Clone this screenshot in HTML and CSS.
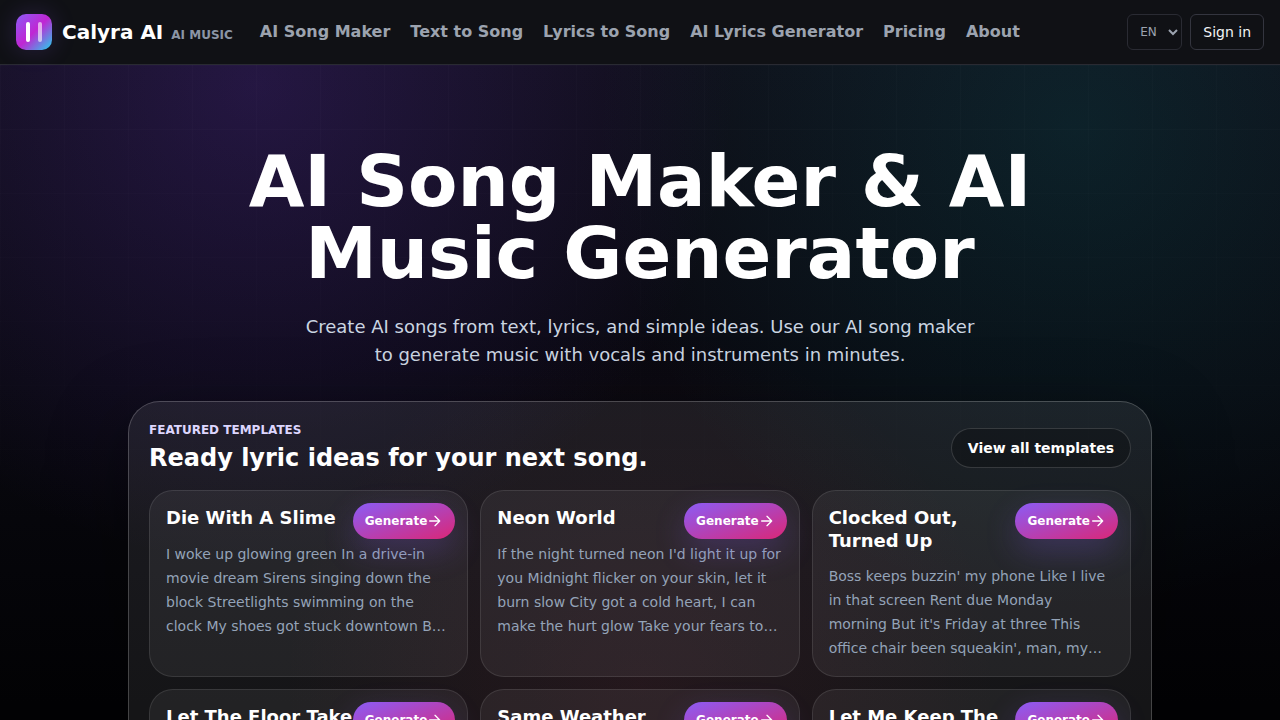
FILE: index.html
```html
<!DOCTYPE html>
<html lang="en">
<head>
<meta charset="utf-8">
<meta name="viewport" content="width=device-width, initial-scale=1">
<title>Calyra AI</title>
<link rel="stylesheet" href="styles.css">
</head>
<body>
<svg class="sprite" aria-hidden="true">
  <symbol id="arrow" viewBox="0 0 24 24"><path d="M4 12h15M12 5l7 7-7 7" fill="none" stroke="currentColor" stroke-width="2" stroke-linecap="round" stroke-linejoin="round"/></symbol>
</svg>
<header class="topbar">
  <a class="brand" href="#">
    <span class="logo"><span class="bar"></span><span class="bar bar-soft"></span></span>
    <span class="brand-text"><span class="brand-name">Calyra AI</span><span class="brand-tag">AI MUSIC</span></span>
  </a>
  <nav class="nav">
    <a href="#">AI Song Maker</a>
    <a href="#">Text to Song</a>
    <a href="#">Lyrics to Song</a>
    <a href="#">AI Lyrics Generator</a>
    <a href="#">Pricing</a>
    <a href="#">About</a>
  </nav>
  <div class="actions">
    <select class="lang" aria-label="Language"><option>EN</option></select>
    <button class="signin" type="button">Sign in</button>
  </div>
</header>
<main class="hero">
  <h1>AI Song Maker &amp; AI Music Generator</h1>
  <p class="lead">Create AI songs from text, lyrics, and simple ideas. Use our AI song maker to generate music with vocals and instruments in minutes.</p>
  <section class="panel">
    <div class="panel-head">
      <div>
        <p class="eyebrow">FEATURED TEMPLATES</p>
        <h2>Ready lyric ideas for your next song.</h2>
      </div>
      <a class="view-all" href="#">View all templates</a>
    </div>
    <div class="cards">
      <article class="card">
        <h3>Die With A Slime</h3>
        <p>I woke up glowing green In a drive-in movie dream Sirens singing down the block Streetlights swimming on the clock My shoes got stuck downtown B…</p>
        <button class="generate" type="button">Generate<svg><use href="#arrow"/></svg></button>
      </article>
      <article class="card">
        <h3>Neon World</h3>
        <p>If the night turned neon I'd light it up for you Midnight flicker on your skin, let it burn slow City got a cold heart, I can make the hurt glow Take your fears to…</p>
        <button class="generate" type="button">Generate<svg><use href="#arrow"/></svg></button>
      </article>
      <article class="card">
        <h3>Clocked Out, Turned Up</h3>
        <p>Boss keeps buzzin' my phone Like I live in that screen Rent due Monday morning But it's Friday at three This office chair been squeakin', man, my…</p>
        <button class="generate" type="button">Generate<svg><use href="#arrow"/></svg></button>
      </article>
      <article class="card">
        <h3>Let The Floor Take</h3>
        <button class="generate" type="button">Generate<svg><use href="#arrow"/></svg></button>
      </article>
      <article class="card">
        <h3>Same Weather</h3>
        <button class="generate" type="button">Generate<svg><use href="#arrow"/></svg></button>
      </article>
      <article class="card">
        <h3>Let Me Keep The</h3>
        <button class="generate" type="button">Generate<svg><use href="#arrow"/></svg></button>
      </article>
    </div>
  </section>
</main>
</body>
</html>
```
FILE: styles.css
```css
* { box-sizing: border-box; }
body {
  margin: 0;
  background: #020204;
  color: #fff;
  font-family: "DejaVu Sans", sans-serif;
}
h1, h2, h3, p { margin: 0; }
a { color: inherit; text-decoration: none; }
button, select { font-family: inherit; }
.sprite { display: none; }

.topbar {
  position: relative;
  z-index: 1;
  display: flex;
  align-items: center;
  height: 65px;
  padding: 0 16px;
  background: #101115;
  border-bottom: 1px solid #292a32;
}
.brand { display: flex; align-items: center; gap: 10px; }
.logo {
  display: flex;
  align-items: center;
  justify-content: center;
  gap: 8px;
  width: 36px;
  height: 36px;
  border-radius: 10px;
  background: linear-gradient(135deg, #8b5cf6 0%, #c026d3 50%, #22d3ee 100%);
  box-shadow: 0 0 24px rgba(139, 92, 246, 0.2);
}
.bar { width: 4px; height: 20px; border-radius: 2px; background: #fff; }
.bar-soft { background: rgba(255, 255, 255, 0.6); }
.brand-text { display: flex; align-items: baseline; gap: 8px; }
.brand-name { font-size: 20px; font-weight: 600; }
.brand-tag { font-size: 12px; font-weight: 600; color: #8b95a5; }
.nav {
  display: flex;
  gap: 20px;
  margin-left: 27px;
  padding-bottom: 2px;
  font-size: 16px;
  font-weight: 600;
  color: #9ca3af;
}
.actions { display: flex; gap: 8px; margin-left: auto; }
.lang, .signin {
  height: 36px;
  border: 1px solid #2a2b33;
  border-radius: 6px;
  background: #101115;
}
.lang { width: 55px; padding: 0 0 0 8px; font-size: 12px; color: #9ca3af; }
.signin { padding: 0 12px; border-color: #34353f; font-size: 14px; color: #f3f4f6; }

.hero {
  position: relative;
  padding: 80px 24px 64px;
  text-align: center;
  background:
    radial-gradient(circle 480px at 20% 20px, rgba(124, 58, 237, 0.2), transparent),
    radial-gradient(circle 480px at 84% 64px, rgba(6, 182, 180, 0.12), transparent),
    radial-gradient(circle 360px at 50% 620px, rgba(225, 29, 72, 0.07), transparent),
    linear-gradient(180deg, #0f0e18 0, #090910 320px, #020204 640px);
}
.hero::before {
  content: "";
  position: absolute;
  inset: 0;
  background:
    linear-gradient(90deg, rgba(255, 255, 255, 0.014) 1px, transparent 1px) 0 0 / 64px 64px,
    linear-gradient(rgba(255, 255, 255, 0.014) 1px, transparent 1px) 0 0 / 64px 64px;
  mask-image: linear-gradient(#000, transparent 640px);
}
.hero > * { position: relative; }
h1 {
  max-width: 896px;
  margin: 0 auto;
  font-size: 72px;
  line-height: 72px;
  font-weight: 600;
}
.lead {
  max-width: 672px;
  margin: 24px auto 0;
  font-size: 18px;
  line-height: 28px;
  color: #cbd5e1;
}
.panel {
  max-width: 1024px;
  margin: 32px auto 0;
  padding: 20px;
  border: 1px solid rgba(255, 255, 255, 0.2);
  border-radius: 32px;
  background: rgba(255, 255, 255, 0.08);
  box-shadow: 0 24px 80px rgba(0, 0, 0, 0.4);
  text-align: left;
}
.panel-head {
  display: flex;
  align-items: center;
  justify-content: space-between;
  margin-bottom: 16px;
}
.eyebrow { font-size: 12px; line-height: 16px; font-weight: 600; color: #ddd6fe; }
h2 { margin-top: 4px; font-size: 24px; line-height: 32px; font-weight: 600; }
.view-all {
  padding: 0 16px;
  border: 1px solid rgba(255, 255, 255, 0.15);
  border-radius: 20px;
  background: rgba(0, 0, 0, 0.25);
  font-size: 14px;
  line-height: 38px;
  font-weight: 600;
}
.cards { display: grid; grid-template-columns: repeat(3, 1fr); gap: 12px; }
.card {
  position: relative;
  min-height: 187px;
  padding: 16px;
  border: 1px solid rgba(255, 255, 255, 0.1);
  border-radius: 24px;
  background: rgba(255, 255, 255, 0.06);
}
h3 { padding-right: 96px; font-size: 18px; line-height: 1.25; font-weight: 600; }
.card p { margin-top: 12px; font-size: 14px; line-height: 24px; color: #94a3b8; }
.generate {
  position: absolute;
  top: 12px;
  right: 12px;
  display: flex;
  align-items: center;
  height: 36px;
  padding: 0 12px;
  border: 0;
  border-radius: 18px;
  background: linear-gradient(to bottom right, #8b5cf6, #db2777);
  box-shadow: 0 12px 32px rgba(139, 92, 246, 0.24);
  font-size: 12px;
  font-weight: 600;
  color: #fff;
}
.generate svg { width: 16px; height: 16px; }
```
